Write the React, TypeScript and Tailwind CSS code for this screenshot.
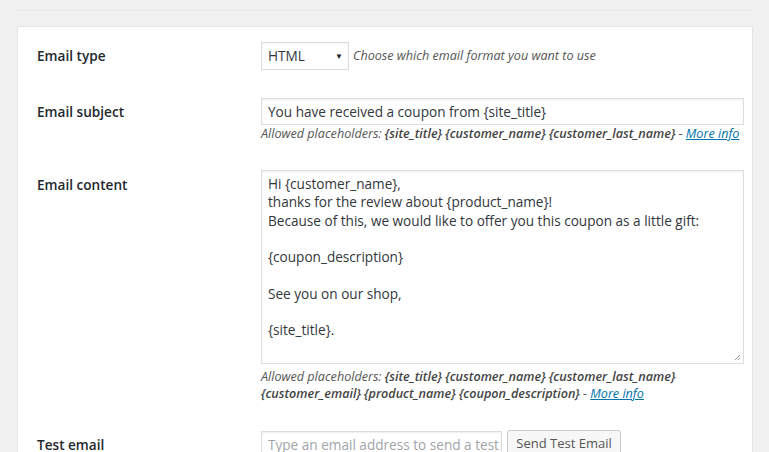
const font = { fontFamily: '"Open Sans", "Liberation Sans", sans-serif' }

const contentLines = [
  'Hi {customer_name},',
  'thanks for the review about {product_name}!',
  'Because of this, we would like to offer you this coupon as a little gift:',
  '',
  '{coupon_description}',
  '',
  'See you on our shop,',
  '',
  '{site_title}.',
]

function Label({ children, className = '' }: { children: React.ReactNode; className?: string }) {
  return (
    <div className={`w-[224px] shrink-0 text-[13.6px] font-semibold text-[#23282d] ${className}`}>
      {children}
    </div>
  )
}

function MoreInfo() {
  return <a className="text-[#0073aa] underline" href="#">More info</a>
}

export default function App() {
  return (
    <div className="h-[452px] overflow-hidden bg-[#f1f1f1] px-[17px] pr-[16px]" style={font}>
      {/* heading (mostly scrolled out of view) */}
      <div className="h-[10px] overflow-hidden">
        <h2 className="-mt-[29px] pl-[20px] text-[21px] font-normal leading-[28px] text-[#23282d]">
          Coupon mailing settings
        </h2>
      </div>
      <div className="h-px bg-[#e9e9e9]" />

      <div className="mt-[15px] border border-[#e5e5e5] bg-white pl-[19px] pt-[15px] pb-10 shadow-[0_1px_1px_rgba(0,0,0,0.04)]">
        {/* Email type */}
        <div className="flex">
          <Label className="leading-[28px]">Email type</Label>
          <div className="flex items-center">
            <div className="flex h-[28px] w-[88px] items-center justify-between border border-[#ddd] pl-[6px] pr-[5px] text-[13.6px] text-[#32373c] shadow-[inset_0_1px_2px_rgba(0,0,0,0.05)]">
              <span>HTML</span>
              <span className="text-[8px] text-[#222]">▼</span>
            </div>
            <span className="ml-[4px] text-[12.6px] italic text-[#555]">Choose which email format you want to use</span>
          </div>
        </div>

        {/* Email subject */}
        <div className="mt-[28px] flex">
          <Label className="leading-[27px]">Email subject</Label>
          <div>
            <div className="h-[27px] w-[483px] border border-[#ddd] px-[6px] text-[13.6px] leading-[25px] text-[#32373c] shadow-[inset_0_1px_2px_rgba(0,0,0,0.07)]">
              You have received a coupon from {'{site_title}'}
            </div>
            <p className="text-[12.6px] italic leading-[17px] text-[#555]">
              Allowed placeholders: <b className="font-semibold text-[#444]">{'{site_title} {customer_name} {customer_last_name}'}</b> - <MoreInfo />
            </p>
          </div>
        </div>

        {/* Email content */}
        <div className="mt-[28px] flex">
          <Label className="pt-[7px] leading-[16px]">Email content</Label>
          <div>
            <div className="relative h-[194px] w-[483px] border border-[#ddd] px-[6px] pt-[4px] text-[13.6px] leading-[18.3px] text-[#32373c] shadow-[inset_0_1px_2px_rgba(0,0,0,0.07)]">
              {contentLines.map((line, i) => (
                <div key={i} className="h-[18.3px] whitespace-pre">{line}</div>
              ))}
              <svg className="absolute bottom-[2px] right-[2px]" width="7" height="7" viewBox="0 0 7 7">
                <path d="M6 1 L1 6 M6 4 L4 6" stroke="#999" strokeWidth="1" />
              </svg>
            </div>
            <p className="mt-[4px] w-[440px] text-[12.6px] italic leading-[17px] text-[#555]">
              Allowed placeholders:{' '}
              <b className="font-semibold text-[#444]">{'{site_title} {customer_name} {customer_last_name}'}</b>{' '}
              <b className="font-semibold text-[#444]">{'{customer_email} {product_name} {coupon_description}'}</b> - <MoreInfo />
            </p>
          </div>
        </div>

        {/* Test email */}
        <div className="mt-[29px] flex">
          <Label className="leading-[27px]">Test email</Label>
          <div className="flex items-start">
            <div className="h-[27px] w-[241px] overflow-hidden whitespace-nowrap border border-[#ddd] px-[6px] text-[13.6px] leading-[25px] text-[#a0a5aa] shadow-[inset_0_1px_2px_rgba(0,0,0,0.07)]">
              Type an email address to send a test
            </div>
            <button className="-mt-px ml-[5px] h-[28px] w-[114px] rounded-[3px] border border-[#ccc] bg-[#f7f7f7] text-[13px] text-[#555] shadow-[0_1px_0_#ccc]">
              Send Test Email
            </button>
          </div>
        </div>
      </div>
    </div>
  )
}
